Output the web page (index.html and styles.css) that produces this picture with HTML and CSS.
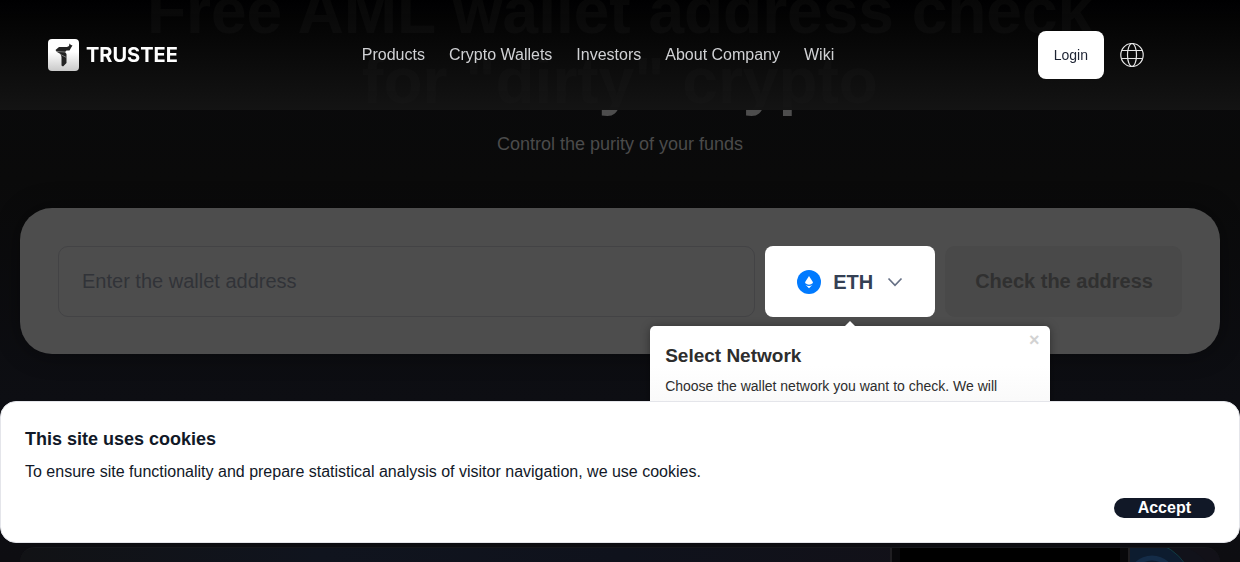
FILE: index.html
```html
<!DOCTYPE html>
<html lang="en">

<head>
    <meta charset="utf-8">
    <meta name="viewport" content="width=device-width, initial-scale=1">
    <title>Free AML wallet address check</title>
    <link rel="stylesheet" href="styles.css">
</head>

<body>
    <header class="header">
        <a href="#" class="logo">
            <svg class="logo-mark" viewBox="0 0 31 32" aria-hidden="true">
                <defs>
                    <linearGradient id="mark" x1="0" y1="0" x2="0" y2="1">
                        <stop offset="0.4" stop-color="#fff" />
                        <stop offset="1" stop-color="#c9c9c9" />
                    </linearGradient>
                </defs>
                <rect width="31" height="32" rx="4" fill="url(#mark)" />
                <path d="M7.500 11L11 8h8l2-1 .5-2.500L23 6l1.500.5-1 1.500-2 3.500h-3L17 13l1.500 2v9L15 27.500l-1.500-1V18l-1-3-3.500-2z" fill="#222" />
                <path d="M9 12.500l8 .5M12.500 15.500l6 3" stroke="#999" stroke-width="0.700" fill="none" />
            </svg>
            <span>TRUSTEE</span>
        </a>
        <nav class="nav">
            <a href="#">Products</a>
            <a href="#">Crypto Wallets</a>
            <a href="#">Investors</a>
            <a href="#">About Company</a>
            <a href="#">Wiki</a>
        </nav>
        <div class="actions">
            <button type="button" class="login">Login</button>
            <button type="button" class="lang" aria-label="Language">
                <svg viewBox="0 0 24 24" width="24" height="24" fill="none" stroke="#e6e6e6" stroke-width="1.200" aria-hidden="true">
                    <ellipse cx="12" cy="12" rx="11.200" ry="12" transform="translate(0 .5) scale(1 .96)" />
                    <ellipse cx="12" cy="12" rx="4.500" ry="11.500" />
                    <path d="M1.500 7.500h21M1.500 15.500h21" />
                </svg>
            </button>
        </div>
    </header>

    <main class="hero">
        <h1>Free AML wallet address check<br>for "dirty" crypto</h1>
        <p class="subtitle">Control the purity of your funds</p>

        <form class="check">
            <input type="text" class="address" placeholder="Enter the wallet address" aria-label="Wallet address">
            <div class="network">
                <svg class="coin" viewBox="0 0 24 24" aria-hidden="true">
                    <circle cx="12" cy="12" r="12" fill="#007aff" />
                    <path d="M12 6l3.500 5.500.5 1.500q-4 3.500-8 0l.5-1.500z" fill="#fff" />
                    <path d="M8.500 14.800q3.500 2.500 7 0L12 18.300z" fill="#fff" />
                </svg>
                <select aria-label="Network">
                    <option>ETH</option>
                </select>
                <svg class="chevron" viewBox="0 0 16 10" aria-hidden="true">
                    <path d="M1.500 1.500L8 8.300l6.500-6.800" fill="none" stroke="#667085" stroke-width="1.700" />
                </svg>
                <div class="popover" role="dialog" aria-labelledby="tour-title">
                    <button type="button" class="popover-close" aria-label="Close">&times;</button>
                    <h2 id="tour-title">Select Network</h2>
                    <p>Choose the wallet network you want to check. We will</p>
                </div>
            </div>
            <button type="submit" class="submit" disabled>Check the address</button>
        </form>
    </main>

    <section class="promo">
        <div class="phone"></div>
        <svg class="rings" viewBox="0 0 90 60" aria-hidden="true">
            <circle cx="30" cy="55" r="62" fill="#11121a" />
            <circle cx="12" cy="45" r="52" fill="#0d1c2f" stroke="#123b42" />
            <circle cx="22" cy="32" r="22" fill="none" stroke="#142c48" stroke-width="5" />
        </svg>
    </section>

    <div class="cookies">
        <h2>This site uses cookies</h2>
        <p>To ensure site functionality and prepare statistical analysis of visitor navigation, we use cookies.</p>
        <button type="button" class="accept">Accept</button>
    </div>
</body>

</html>
```

FILE: styles.css
```css
* {
    box-sizing: border-box;
}

body {
    margin: 0;
    height: 100vh;
    overflow: hidden;
    display: flex;
    flex-direction: column;
    background: linear-gradient(#08090b, #0a0a0a 180px, #0d0e13 400px, #0d0d11);
    font-family: "Liberation Sans", Arial, sans-serif;
}

h1,
h2,
p {
    margin: 0;
}

button {
    font-family: inherit;
    border: 0;
    padding: 0;
    cursor: pointer;
}

/* header */
.header {
    position: fixed;
    top: 0;
    left: 0;
    right: 0;
    z-index: 10;
    height: 110px;
    padding: 0 92px 0 48px;
    display: grid;
    grid-template-columns: 1fr auto 1fr;
    align-items: center;
    background: linear-gradient(rgba(0, 0, 0, 0.9), rgba(20, 20, 20, 0.98));
}

.logo {
    display: flex;
    align-items: center;
    gap: 7px;
    color: #fff;
    font-family: Inter, sans-serif;
    font-size: 20px;
    font-weight: 700;
    text-decoration: none;
}

.logo-mark {
    width: 31px;
    height: 32px;
}

.nav {
    display: flex;
    gap: 24px;
}

.nav a {
    color: #d0d1d4;
    font-size: 16px;
    text-decoration: none;
}

.actions {
    display: flex;
    justify-content: flex-end;
    align-items: center;
    gap: 12px;
}

.login {
    height: 48px;
    padding: 0 16px;
    border-radius: 8px;
    background: #fff;
    color: #1d2333;
    font-size: 14px;
}

.lang {
    display: flex;
    padding: 4px;
    background: none;
}

/* hero */
.hero {
    margin-top: -24px;
    padding: 0 20px;
    text-align: center;
}

.hero h1 {
    color: #4d4d4d;
    font-size: 64px;
    line-height: 70px;
}

.subtitle {
    margin-top: 14px;
    color: #4b4b4b;
    font-size: 18px;
    line-height: 28px;
}

.check {
    display: flex;
    gap: 10px;
    margin-top: 50px;
    padding: 38px 38px 37px;
    border-radius: 32px;
    background: #4d4d4d;
    box-shadow: 0 0 24px rgba(0, 0, 0, 0.4);
}

.address {
    flex: 1;
    min-width: 0;
    height: 71px;
    padding: 0 23px;
    border: 1px solid #434345;
    border-radius: 10px;
    background: none;
    font-family: inherit;
    font-size: 20px;
}

.address::placeholder {
    color: #313338;
}

.network {
    position: relative;
    display: flex;
    align-items: center;
    gap: 12px;
    width: 170px;
    padding: 0 32px;
    border-radius: 8px;
    background: #fff;
}

.coin {
    width: 24px;
    height: 24px;
}

.network select {
    appearance: none;
    flex: 1;
    padding: 0;
    border: 0;
    background: none;
    color: #344054;
    font-family: inherit;
    font-size: 20px;
    font-weight: bold;
}

.chevron {
    width: 16px;
    height: 10px;
}

.submit {
    padding: 0 29px 0 30px;
    border-radius: 10px;
    background: #494949;
    color: #303030;
    font-size: 20px;
    font-weight: bold;
}

.popover {
    position: absolute;
    top: calc(100% + 9px);
    left: 50%;
    transform: translateX(-50%);
    width: 400px;
    min-height: 160px;
    padding: 15px;
    border-radius: 5px;
    background: linear-gradient(#fff 40px, #f9f9f9 80px);
    box-shadow: 0 1px 10px rgba(0, 0, 0, 0.4);
    color: #2d2d2d;
    text-align: left;
}

.popover::before {
    content: "";
    position: absolute;
    bottom: 100%;
    left: 50%;
    margin-left: -5px;
    border: 5px solid transparent;
    border-top: 0;
    border-bottom-color: #fff;
}

.popover h2 {
    font-size: 19px;
    line-height: 30px;
}

.popover p {
    margin-top: 5px;
    font-size: 14px;
    line-height: 21px;
}

.popover-close {
    position: absolute;
    top: 0;
    right: 0;
    width: 32px;
    height: 28px;
    background: none;
    color: #d2d2d2;
    font-size: 18px;
    font-weight: bold;
}

/* next block, mostly under the cookie bar */
.promo {
    flex: 1;
    display: flex;
    justify-content: flex-end;
    min-height: 0;
    margin: 193px 20px 0;
    border-top: 1px solid #17181c;
    border-radius: 60px 60px 0 0;
    background: linear-gradient(90deg, #111215, #10141e 25%, #0f121c 50%, #121118 75%);
    overflow: hidden;
}

.phone {
    width: 240px;
    border: solid #1f1e21;
    border-width: 0 2px;
    background: #000;
    box-shadow: inset 8px 0 #08080a, inset -8px 0 #08080a;
}

.rings {
    width: 90px;
    height: 60px;
}

/* cookies */
.cookies {
    position: fixed;
    left: 0;
    right: 0;
    bottom: 19px;
    z-index: 20;
    display: flex;
    flex-direction: column;
    padding: 24px;
    border: 1px solid #e4e5ea;
    border-radius: 16px;
    background: #fff;
    color: #111827;
}

.cookies h2 {
    font-size: 18px;
    line-height: 26px;
}

.cookies p {
    margin: 8px 0 14px;
    font-size: 16px;
    line-height: 24px;
}

.accept {
    align-self: flex-end;
    padding: 0 24px;
    border-radius: 10px;
    background: #111827;
    color: #fff;
    font-size: 16px;
    font-weight: bold;
    line-height: 20px;
}
```
